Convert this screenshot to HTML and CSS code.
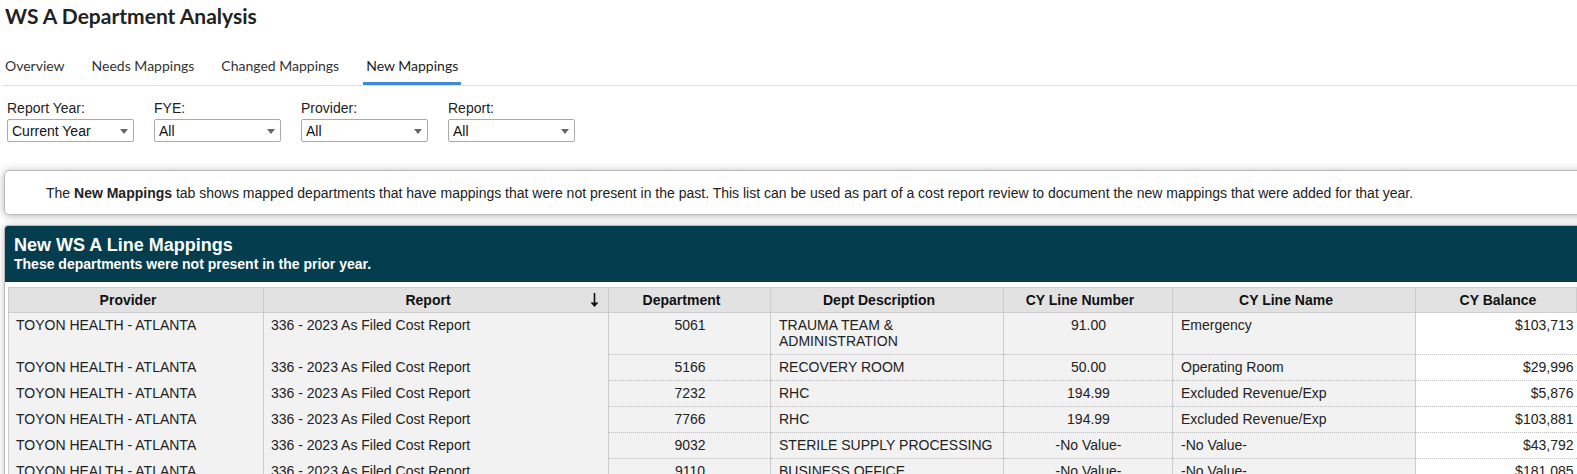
FILE: index.html
```html
<!DOCTYPE html>
<html lang="en">
<head>
  <meta charset="UTF-8">
  <title>WS A Department Analysis</title>
  <link rel="stylesheet" href="styles.css">
</head>
<body>

<div class="page">
  <h1 class="title">WS A Department Analysis</h1>

  <div class="tabs">
    <a class="tab">Overview</a>
    <a class="tab">Needs Mappings</a>
    <a class="tab">Changed Mappings</a>
    <a class="tab active">New Mappings</a>
  </div>

  <div class="filters">
    <div class="filter">
      <label>Report Year:</label>
      <div class="select">
        <select><option>Current Year</option></select>
        <svg class="caret" width="8" height="5" viewBox="0 0 8 5"><path d="M0 0h8L4 5z" fill="#666"/></svg>
      </div>
    </div>
    <div class="filter">
      <label>FYE:</label>
      <div class="select">
        <select><option>All</option></select>
        <svg class="caret" width="8" height="5" viewBox="0 0 8 5"><path d="M0 0h8L4 5z" fill="#666"/></svg>
      </div>
    </div>
    <div class="filter">
      <label>Provider:</label>
      <div class="select">
        <select><option>All</option></select>
        <svg class="caret" width="8" height="5" viewBox="0 0 8 5"><path d="M0 0h8L4 5z" fill="#666"/></svg>
      </div>
    </div>
    <div class="filter">
      <label>Report:</label>
      <div class="select">
        <select><option>All</option></select>
        <svg class="caret" width="8" height="5" viewBox="0 0 8 5"><path d="M0 0h8L4 5z" fill="#666"/></svg>
      </div>
    </div>
  </div>

  <div class="info">
    The <b>New Mappings</b> tab shows mapped departments that have mappings that were not present in the past. This list can be used as part of a cost report review to document the new mappings that were added for that year.
  </div>

  <div class="panel">
    <div class="panel-head">
      <div class="panel-title">New WS A Line Mappings</div>
      <div class="panel-sub">These departments were not present in the prior year.</div>
    </div>
    <div class="panel-body">
      <table class="grid">
        <colgroup>
          <col style="width:255px">
          <col style="width:345px">
          <col style="width:162px">
          <col style="width:233px">
          <col style="width:169px">
          <col style="width:243px">
          <col style="width:161px">
          <col style="width:160px">
        </colgroup>
        <thead>
          <tr>
            <th>Provider</th>
            <th class="sorted">Report
              <svg class="sort" width="9" height="15" viewBox="0 0 9 15"><path d="M4.5 0v10" stroke="#111" stroke-width="1.6"/><path d="M0.5 9.5h8L4.5 14z" fill="#111"/></svg>
            </th>
            <th>Department</th>
            <th>Dept Description</th>
            <th>CY Line Number</th>
            <th>CY Line Name</th>
            <th class="bal-head">CY Balance</th>
            <th></th>
          </tr>
        </thead>
        <tbody>
          <tr>
            <td class="grp">TOYON HEALTH - ATLANTA</td>
            <td class="grp">336 - 2023 As Filed Cost Report</td>
            <td class="c">5061</td>
            <td>TRAUMA TEAM &amp; ADMINISTRATION</td>
            <td class="c">91.00</td>
            <td>Emergency</td>
            <td class="bal">$103,713</td>
            <td class="more"></td>
          </tr>
          <tr>
            <td class="grp">TOYON HEALTH - ATLANTA</td>
            <td class="grp">336 - 2023 As Filed Cost Report</td>
            <td class="c">5166</td>
            <td>RECOVERY ROOM</td>
            <td class="c">50.00</td>
            <td>Operating Room</td>
            <td class="bal">$29,996</td>
            <td class="more"></td>
          </tr>
          <tr>
            <td class="grp">TOYON HEALTH - ATLANTA</td>
            <td class="grp">336 - 2023 As Filed Cost Report</td>
            <td class="c">7232</td>
            <td>RHC</td>
            <td class="c">194.99</td>
            <td>Excluded Revenue/Exp</td>
            <td class="bal">$5,876</td>
            <td class="more"></td>
          </tr>
          <tr>
            <td class="grp">TOYON HEALTH - ATLANTA</td>
            <td class="grp">336 - 2023 As Filed Cost Report</td>
            <td class="c">7766</td>
            <td>RHC</td>
            <td class="c">194.99</td>
            <td>Excluded Revenue/Exp</td>
            <td class="bal">$103,881</td>
            <td class="more"></td>
          </tr>
          <tr>
            <td class="grp">TOYON HEALTH - ATLANTA</td>
            <td class="grp">336 - 2023 As Filed Cost Report</td>
            <td class="c">9032</td>
            <td>STERILE SUPPLY PROCESSING</td>
            <td class="c">-No Value-</td>
            <td>-No Value-</td>
            <td class="bal">$43,792</td>
            <td class="more"></td>
          </tr>
          <tr>
            <td class="grp">TOYON HEALTH - ATLANTA</td>
            <td class="grp">336 - 2023 As Filed Cost Report</td>
            <td class="c">9110</td>
            <td>BUSINESS OFFICE</td>
            <td class="c">-No Value-</td>
            <td>-No Value-</td>
            <td class="bal">$181,085</td>
            <td class="more"></td>
          </tr>
        </tbody>
      </table>
    </div>
  </div>
</div>

</body>
</html>
```

FILE: styles.css
```css
html, body {
  overflow: hidden;
}
body {
  margin: 0;
  font-family: "Liberation Sans", Arial, sans-serif;
  font-size: 14px;
  color: #222;
  background-color: #fff;
}
.page {
  width: 1760px;
  padding: 0 0 0 4px;
}
.title {
  font-family: Lato, "Liberation Sans", sans-serif;
  font-size: 21px;
  font-weight: 700;
  line-height: 24px;
  color: #222;
  margin: 4px 0 0 1px;
}
.tabs {
  display: flex;
  margin: 29px 0 0 -2px;
  border-bottom: 1px solid #ddd;
  width: 1575px;
}
.tab {
  font-family: Lato, "Liberation Sans", sans-serif;
  font-size: 14px;
  line-height: 18px;
  color: #333;
  padding: 0 3px 7px;
  margin-right: 21px;
  border-bottom: 3px solid transparent;
  cursor: pointer;
}
.tab.active {
  color: #222;
  border-bottom-color: #3c8ad8;
}
.filters {
  display: flex;
  gap: 20px;
  margin-top: 14px;
  padding-left: 3px;
}
.filter label {
  display: block;
  line-height: 16px;
  margin-bottom: 3px;
  color: #222;
}
.select {
  position: relative;
  width: 127px;
  height: 23px;
}
.select select {
  appearance: none;
  -webkit-appearance: none;
  box-sizing: border-box;
  width: 100%;
  height: 100%;
  border: 1px solid #aaa;
  border-radius: 2px;
  background: #fff;
  font-family: "Liberation Sans", Arial, sans-serif;
  font-size: 14px;
  color: #111;
  padding: 0 0 0 4px;
}
.caret {
  position: absolute;
  right: 6px;
  top: 10px;
}
.info {
  margin-top: 28px;
  width: 1600px;
  background: #fff;
  border: 1px solid #bbb;
  border-radius: 5px;
  box-shadow: 0 1px 8px rgba(0, 0, 0, 0.3);
  padding: 14px 40px 13px 41px;
  line-height: 16px;
  color: #222;
}
.panel {
  margin-top: 10px;
  width: 1760px;
  border: 1px solid #bbb;
  border-radius: 4px 4px 0 0;
  background: #fff;
  box-shadow: 0 1px 6px rgba(0, 0, 0, 0.25);
}
.panel-head {
  background-color: #033d4e;
  color: #fff;
  padding: 9px 9px 10px;
  border-radius: 3px 3px 0 0;
  font-weight: 700;
}
.panel-title {
  font-size: 18px;
  line-height: 21px;
}
.panel-sub {
  font-size: 14px;
  line-height: 16px;
}
.panel-body {
  padding: 5px 3px 0;
}
.grid {
  width: 1728px;
  border-collapse: collapse;
  table-layout: fixed;
  border: 1px solid #ccc;
}
.grid th {
  position: relative;
  background-color: #e2e2e2;
  font-weight: 700;
  color: #111;
  line-height: 16px;
  padding: 4px 16px 4px 0;
  border: 1px solid #ccc;
  border-top: 0;
  text-align: center;
}
.grid th.bal-head {
  padding: 4px 0 4px 4px;
}
.grid .sort {
  position: absolute;
  right: 9px;
  top: 5px;
}
.grid td {
  background-color: #f2f2f2;
  line-height: 16px;
  padding: 4px 7px 5px 8px;
  border-left: 1px solid #ccc;
  border-right: 1px solid #ccc;
  border-bottom: 1px dotted #bbb;
  vertical-align: top;
  color: #222;
}
.grid td.grp {
  border-bottom: 0;
  padding-left: 7px;
}
.grid td.c {
  text-align: center;
}
.grid td.bal {
  background-color: #fff;
  text-align: right;
  padding-right: 3px;
  border-right: hidden;
}
.grid td.more {
  background-color: #fff;
  border-left: hidden;
}
```
